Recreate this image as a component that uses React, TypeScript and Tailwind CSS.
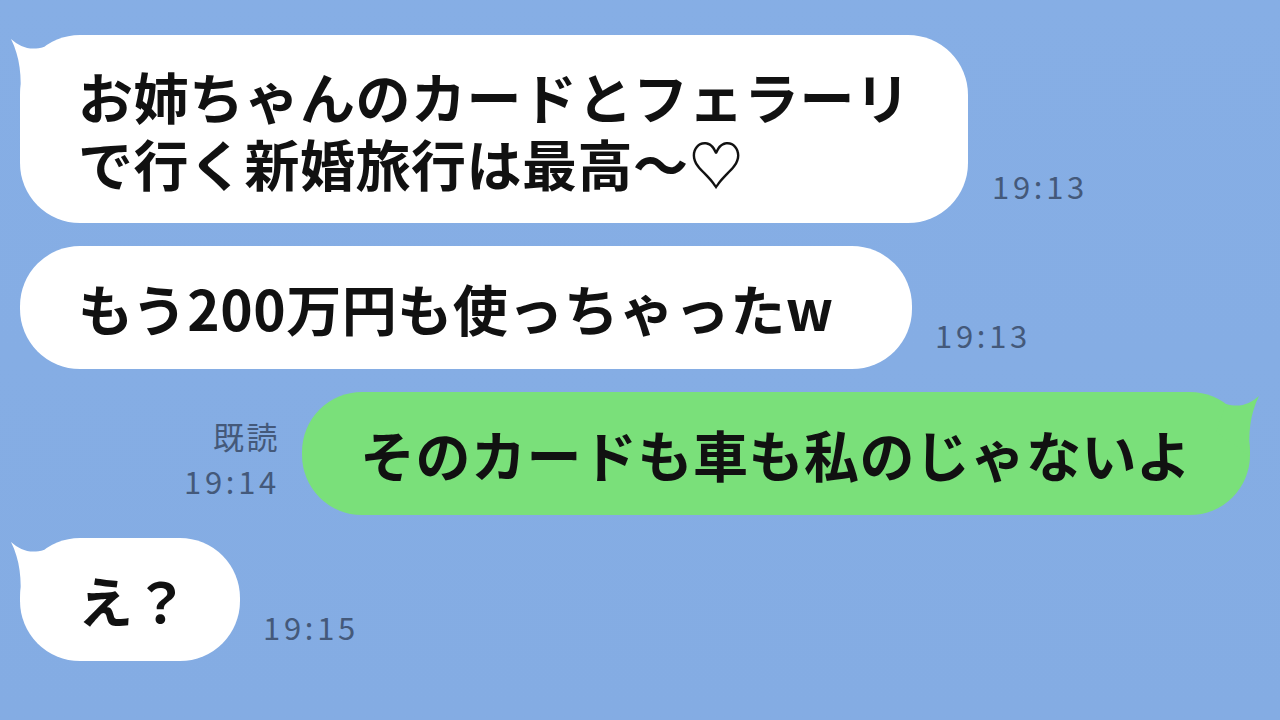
import React from 'react';

// Tail drawn at the top corner of a bubble; mirrored for own messages
function Tail({ color, side }: { color: string; side: 'left' | 'right' }) {
    return (
        <svg
            className={side === 'left' ? 'absolute left-[-12px] top-0' : 'absolute right-[-12px] top-0 -scale-x-100'}
            width="52"
            height="70"
            viewBox="-12 0 52 70"
        >
            <path d="M -9 4 C 0 12, 10 16, 24 12 L 34 40 L 0 64 C 2 42, 0 22, -9 4 Z" fill={color} />
        </svg>
    );
}

function Time({ label, read, className }: { label: string; read?: boolean; className?: string }) {
    return (
        <div className={'flex flex-col items-end text-[#44597a] text-[31px] leading-none tracking-[0.12em] ' + (className ?? '')}>
            {read && <span className="mb-[14px] tracking-[0.08em]">既読</span>}
            <span>{label}</span>
        </div>
    );
}

const font = { fontFamily: '"Noto Sans CJK JP", "Noto Sans", sans-serif' };

const bubble = 'relative shrink-0 rounded-[60px] pl-[58px] py-[27px] text-[55px] leading-[67px] font-bold text-[#111] whitespace-nowrap tracking-[0.5px]';

export default function App() {
    return (
        <div
            className="w-full h-[720px] overflow-hidden bg-gradient-to-b from-[#86aee5] to-[#84ace3] flex flex-col gap-[23px] pt-[35px]"
            style={font}
        >
            {/* incoming */}
            <div className="flex items-end pl-[20px]">
                <div className={bubble + ' bg-white w-[948px]'}>
                    <Tail color="#ffffff" side="left" />
                    <span className="relative">
                        お姉ちゃんのカードとフェラーリ
                        <br />
                        で行く新婚旅行は最高〜♡
                    </span>
                </div>
                <Time label="19:13" className="ml-[24px] mb-[22px]" />
            </div>

            <div className="flex items-end pl-[20px]">
                <div className={bubble + ' bg-white w-[892px] py-[28px]'}>
                    <span className="relative">もう200万円も使っちゃったw</span>
                </div>
                <Time label="19:13" className="ml-[23px] mb-[19px]" />
            </div>

            {/* outgoing */}
            <div className="flex items-end justify-end pr-[30px]">
                <Time label="19:14" read className="mr-[22px] mb-[19px]" />
                <div className={bubble + ' bg-[#7ae07a] w-[948px] py-[28px]'}>
                    <Tail color="#7ae07a" side="right" />
                    <span className="relative">そのカードも車も私のじゃないよ</span>
                </div>
            </div>

            <div className="flex items-end pl-[20px]">
                <div className={bubble + ' bg-white w-[220px] py-[28px]'}>
                    <Tail color="#ffffff" side="left" />
                    <span className="relative">え？</span>
                </div>
                <Time label="19:15" className="ml-[23px] mb-[19px]" />
            </div>
        </div>
    );
}
